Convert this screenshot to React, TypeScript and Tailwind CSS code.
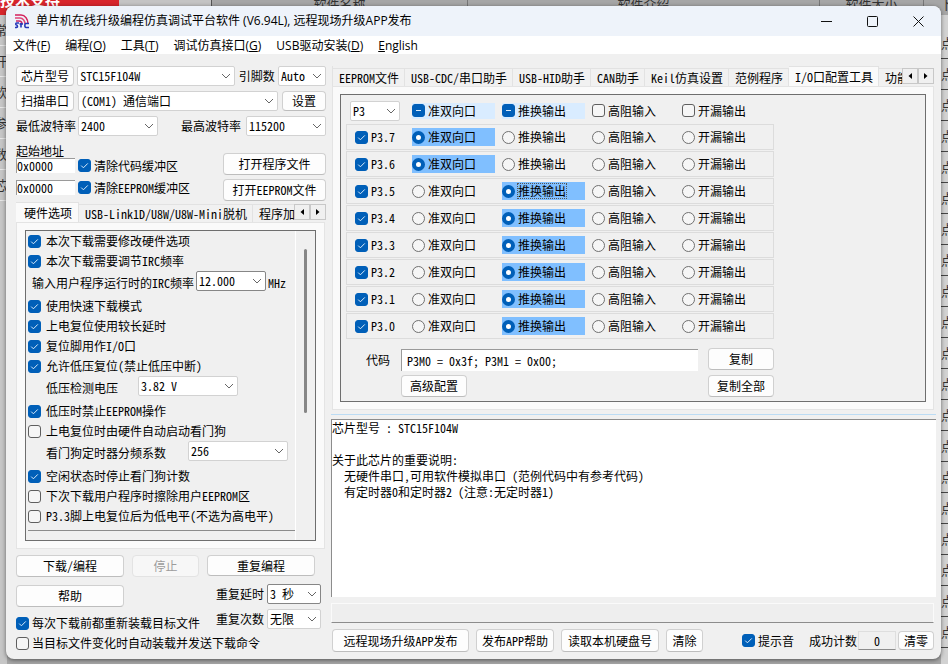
import React, { useId } from "react";

type CheckProps = {
  text: string;
  on?: boolean;
  mixed?: boolean;
  className?: string;
};

function Check({ text, on, mixed, className = "gap-[3px]" }: CheckProps) {
  return (
    <label className={"flex items-center whitespace-nowrap " + className}>
      <span className="grid h-[13px] w-[13px] shrink-0">
        <input
          type="checkbox"
          defaultChecked={on || mixed}
          className="peer col-start-1 row-start-1 h-[13px] w-[13px] appearance-none rounded-[3px] border border-[#5f5f5f] bg-[#f6f6f6] checked:border-[#005fb8] checked:bg-[#005fb8]"
        />
        <svg
          viewBox="0 0 13 13"
          className="pointer-events-none invisible col-start-1 row-start-1 h-[13px] w-[13px] peer-checked:visible"
          fill="none"
          stroke="#d9ebfa"
          strokeWidth="1"
        >
          {mixed ? <path d="M4 6.5h5" /> : <path d="M3.2 6.6l2.2 2.2 4.4-4.4" />}
        </svg>
      </span>
      <span>{text}</span>
    </label>
  );
}

type PickProps = {
  name: string;
  values: string[];
  className?: string;
  dark?: boolean;
  id?: string;
};

function Pick({ name, values, className = "", dark, id }: PickProps) {
  return (
    <span className={"grid h-5 shrink-0 " + className}>
      <select
        id={id}
        aria-label={id ? undefined : name}
        className={
          "col-start-1 row-start-1 h-5 w-full appearance-none rounded-[2px] border bg-white pl-[2px] leading-4 " +
          (dark ? "border-[#868686]" : "border-[#d2d2d2]")
        }
      >
        {values.map((v) => (
          <option key={v}>{v}</option>
        ))}
      </select>
      <svg
        viewBox="0 0 10 6"
        className="pointer-events-none col-start-1 row-start-1 mr-1 h-[6px] w-[10px] self-center justify-self-end"
        fill="none"
        stroke="#666"
        strokeWidth="1"
      >
        <path d="M1 1l4 4 4-4" />
      </svg>
    </span>
  );
}

function Btn({
  children,
  className = "",
  disabled,
}: {
  children: React.ReactNode;
  className?: string;
  disabled?: boolean;
}) {
  return (
    <button
      type="button"
      disabled={disabled}
      className={
        "flex shrink-0 items-center justify-center whitespace-nowrap rounded-[4px] border border-[#d0d0d0] border-b-[#bdbdbd] bg-[#fdfdfd] disabled:border-[#e3e3e3] disabled:bg-[#f7f7f7] disabled:text-[#9c9c9c] " +
        className
      }
    >
      {children}
    </button>
  );
}

function Arrows() {
  return (
    <div className="flex shrink-0">
      <button type="button" aria-label="向左" className="flex h-4 w-4 items-center justify-center border border-[#c8c8c8] bg-[#f0f0f0]">
        <svg viewBox="0 0 4 6" className="h-[6px] w-1"><path d="M4 0v6L0.5 3z" /></svg>
      </button>
      <button type="button" aria-label="向右" className="flex h-4 w-4 items-center justify-center border border-[#c8c8c8] bg-[#f0f0f0]">
        <svg viewBox="0 0 4 6" className="h-[6px] w-1"><path d="M0 0v6l3.5-3z" /></svg>
      </button>
    </div>
  );
}

function Tab({ text, active, className = "pl-[6px] pr-[5px]" }: { text: string; active?: boolean; className?: string }) {
  return (
    <button
      type="button"
      role="tab"
      aria-selected={!!active}
      className={
        "shrink-0 overflow-hidden whitespace-nowrap border border-b-0 border-l-0 border-[#e2e2e2] text-left leading-4 " +
        (active ? "h-5 bg-[#fafafa] " : "h-[18px] bg-[#f1f1f1] ") +
        className
      }
    >
      {text}
    </button>
  );
}

function Menu({ text, mark, close = true }: { text: string; mark: string; close?: boolean }) {
  return (
    <button type="button" className="whitespace-nowrap">
      {close ? (
        <>
          {text}(<u>{mark}</u>)
        </>
      ) : (
        <>
          <u>{mark}</u>
          {text}
        </>
      )}
    </button>
  );
}

const modes = ["准双向口", "推换输出", "高阻输入", "开漏输出"];
const pins = [
  { pin: "P3.7", mode: 0 },
  { pin: "P3.6", mode: 0 },
  { pin: "P3.5", mode: 1, focus: true },
  { pin: "P3.4", mode: 1 },
  { pin: "P3.3", mode: 1 },
  { pin: "P3.2", mode: 1 },
  { pin: "P3.1", mode: 1 },
  { pin: "P3.0", mode: 1 },
];

function PinRow({ pin, mode, focus }: { pin: string; mode: number; focus?: boolean }) {
  return (
    <div role="radiogroup" aria-label={pin} className="flex h-[26px] w-[428px] items-center border border-[#dcdcdc] pl-2">
      <Check text={pin} on className="w-[57px] gap-[3px]" />
      <div className="flex gap-[7px]">
        {modes.map((m, i) => (
          <label
            key={m}
            className={
              "flex h-[18px] w-[83px] items-center gap-[3px] whitespace-nowrap " + (i === mode ? "bg-[#80bfff]" : "")
            }
          >
            <input
              type="radio"
              name={pin}
              defaultChecked={i === mode}
              className="h-[13px] w-[13px] shrink-0 appearance-none rounded-full border border-[#707070] bg-[#f6f6f6] checked:border-4 checked:border-[#005fb8] checked:bg-white"
            />
            <span className={i === mode && focus ? "outline-1 outline-dotted outline-[#555] leading-[14px]" : ""}>{m}</span>
          </label>
        ))}
      </div>
    </div>
  );
}

function HardwareOptions() {
  const irc = useId();
  const lvd = useId();
  const wdt = useId();
  return (
    <div className="flex h-[311px] justify-between border border-[#6e6e6e] bg-[#f0f0f0]">
      <div className="flex-1 border-r border-white pl-[2px]">
        <Check className="h-5 gap-[5px]" on text="本次下载需要修改硬件选项" />
        <Check className="h-5 gap-[5px]" on text="本次下载需要调节IRC频率" />
        <div className="flex h-[25px] items-start gap-[2px] pl-1">
          <label htmlFor={irc} className="whitespace-nowrap pt-1">输入用户程序运行时的IRC频率</label>
          <Pick id={irc} name="IRC" values={["12.000", "11.0592"]} className="w-[70px]" dark />
          <span className="-mr-8 pt-1">MHz</span>
        </div>
        <Check className="h-5 gap-[5px]" on text="使用快速下载模式" />
        <Check className="h-5 gap-[5px]" on text="上电复位使用较长延时" />
        <Check className="h-5 gap-[5px]" on text="复位脚用作I/O口" />
        <Check className="h-5 gap-[5px]" on text="允许低压复位(禁止低压中断)" />
        <div className="flex h-[25px] items-start gap-5 pl-[18px]">
          <label htmlFor={lvd} className="whitespace-nowrap pt-1">低压检测电压</label>
          <Pick id={lvd} name="低压" values={["3.82 V", "4.32 V"]} className="w-[100px]" />
        </div>
        <Check className="h-5 gap-[5px]" on text="低压时禁止EEPROM操作" />
        <Check className="h-5 gap-[5px]" text="上电复位时由硬件自动启动看门狗" />
        <div className="flex h-[25px] items-start gap-[22px] pl-[18px]">
          <label htmlFor={wdt} className="whitespace-nowrap pt-1">看门狗定时器分频系数</label>
          <Pick id={wdt} name="分频" values={["256", "128"]} className="w-[100px]" />
        </div>
        <Check className="h-5 gap-[5px]" on text="空闲状态时停止看门狗计数" />
        <Check className="h-5 gap-[5px]" text="下次下载用户程序时擦除用户EEPROM区" />
        <Check className="h-5 gap-[5px]" text="P3.3脚上电复位后为低电平(不选为高电平)" />
        <hr className="mt-1 border-t border-[#8c8c8c]" />
      </div>
      <div className="flex w-[19px] justify-center pt-[18px]">
        <div className="h-[164px] w-[3px] rounded-full bg-[#868686]" />
      </div>
    </div>
  );
}

function LeftColumn() {
  const id = useId();
  return (
    <div className="w-[310px] shrink-0 pt-3">
      <div className="flex items-center justify-between">
        <Btn className="h-5 w-[58px]">芯片型号</Btn>
        <Pick name="芯片型号" values={["STC15F104W"]} className="w-[158px]" />
        <label htmlFor={id + "a"}>引脚数</label>
        <Pick id={id + "a"} name="引脚数" values={["Auto"]} className="w-12" />
      </div>
      <div className="mt-[5px] flex items-center justify-between">
        <Btn className="h-5 w-[58px]">扫描串口</Btn>
        <Pick name="串口" values={["(COM1) 通信端口"]} className="w-[200px]" />
        <Btn className="h-5 w-11">设置</Btn>
      </div>
      <div className="mt-[5px] flex items-center justify-between">
        <div className="flex items-center gap-[2px]">
          <label htmlFor={id + "b"}>最低波特率</label>
          <Pick id={id + "b"} name="最低波特率" values={["2400"]} className="w-20" />
        </div>
        <div className="flex items-center gap-[5px]">
          <label htmlFor={id + "c"}>最高波特率</label>
          <Pick id={id + "c"} name="最高波特率" values={["115200"]} className="w-20" />
        </div>
      </div>
      <div className="mt-[7px] flex items-start justify-between">
        <div>
          <div className="leading-[15px]">起始地址</div>
          <div className="flex flex-col gap-[7px]">
            {["清除代码缓冲区", "清除EEPROM缓冲区"].map((t) => (
              <div key={t} className="flex h-[15px] items-center gap-[3px]">
                <input
                  aria-label="起始地址"
                  defaultValue="0x0000"
                  className="h-[15px] w-[59px] border-l border-t border-[#9a9a9a] bg-white"
                />
                <Check text={t} on />
              </div>
            ))}
          </div>
        </div>
        <div className="flex flex-col gap-1 pt-[10px]">
          <Btn className="h-[22px] w-[103px]">打开程序文件</Btn>
          <Btn className="h-[22px] w-[103px]">打开EEPROM文件</Btn>
        </div>
      </div>
      <div className="mt-px flex items-end">
        <div role="tablist" className="flex min-w-0 flex-1 items-end overflow-hidden">
          <Tab text="硬件选项" active className="pl-2 pr-[6px]" />
          <Tab text="USB-Link1D/U8W/U8W-Mini脱机" />
          <Tab text="程序加密后传输" />
        </div>
        <div className="mb-[2px]"><Arrows /></div>
      </div>
      <div className="mr-px border border-[#e4e4e4] bg-[#fafafa] px-2 py-[7px]">
        <HardwareOptions />
      </div>
      <div className="mt-[6px] flex items-start justify-between pr-[5px]">
        <div className="flex flex-col gap-2">
          <div className="flex gap-2">
            <Btn className="h-[22px] w-[108px]">下载/编程</Btn>
            <Btn className="h-[22px] w-[67px]" disabled>停止</Btn>
          </div>
          <Btn className="h-[22px] w-[108px]">帮助</Btn>
          <Check text="每次下载前都重新装载目标文件" on className="h-4 gap-[3px]" />
        </div>
        <div className="flex flex-col items-end">
          <Btn className="mb-2 mr-[6px] h-[21px] w-[108px]">重复编程</Btn>
          <div className="mb-[5px] flex items-center gap-[3px]">
            <label htmlFor={id + "d"}>重复延时</label>
            <Pick id={id + "d"} name="重复延时" values={["3 秒"]} className="w-[54px]" dark />
          </div>
          <div className="flex items-center gap-[3px]">
            <label htmlFor={id + "e"}>重复次数</label>
            <Pick id={id + "e"} name="重复次数" values={["无限"]} className="w-[54px]" />
          </div>
        </div>
      </div>
      <Check text="当目标文件变化时自动装载并发送下载命令" className="mt-1 h-4 gap-[3px]" />
    </div>
  );
}

function RightColumn() {
  return (
    <div className="flex min-w-0 flex-1 flex-col pt-3">
      <div className="flex items-end pl-px pr-[2px]">
        <div role="tablist" className="flex min-w-0 flex-1 items-end overflow-hidden border-l border-[#e2e2e2]">
          <Tab text="EEPROM文件" />
          <Tab text="USB-CDC/串口助手" />
          <Tab text="USB-HID助手" />
          <Tab text="CAN助手" />
          <Tab text="Keil仿真设置" />
          <Tab text="范例程序" />
          <Tab text="I/O口配置工具" active />
          <Tab text="功能脚切换" />
        </div>
        <div className="mb-[2px]"><Arrows /></div>
      </div>
      <div className="ml-px mr-[2px] border border-[#e4e4e4] bg-[#fafafa] p-[7px]">
        <div className="border border-[#6e6e6e] bg-[#f0f0f0] pb-1 pl-[5px] pt-[5px]">
          <div className="flex h-[21px] items-center pl-1">
            <Pick name="端口" values={["P3"]} className="w-[50px]" />
            <div className="ml-3 flex gap-[7px]">
              <Check text={modes[0]} mixed className="h-4 w-[83px] gap-[3px] bg-[#d9ecff]" />
              <Check text={modes[1]} mixed className="h-4 w-[83px] gap-[3px] bg-[#d9ecff]" />
              <Check text={modes[2]} className="h-4 w-[83px] gap-[3px]" />
              <Check text={modes[3]} className="h-4 w-[83px] gap-[3px]" />
            </div>
          </div>
          <div className="mt-[3px] flex flex-col gap-px">
            {pins.map((p) => (
              <PinRow key={p.pin} {...p} />
            ))}
          </div>
          <div className="mt-[9px] flex items-start pl-5">
            <label htmlFor="code" className="w-[35px] pt-1">代码</label>
            <div className="flex flex-col gap-1">
              <input
                id="code"
                defaultValue="P3M0 = 0x3f; P3M1 = 0x00;"
                className="mt-px h-[22px] w-[297px] border-l border-t border-[#9a9a9a] bg-white pl-[5px]"
              />
              <Btn className="h-[22px] w-[66px]">高级配置</Btn>
            </div>
            <div className="ml-[10px] flex flex-col gap-[5px]">
              <Btn className="h-[22px] w-[66px]">复制</Btn>
              <Btn className="h-[22px] w-[66px]">复制全部</Btn>
            </div>
          </div>
        </div>
      </div>
      <div className="mt-1 border-t border-[#bcdcf4]" />
      <textarea
        aria-label="芯片说明"
        className="mt-1 h-[178px] w-full resize-none border-l border-t border-[#8c8c8c] bg-white leading-4"
        defaultValue={
          "芯片型号 : STC15F104W\n\n关于此芯片的重要说明:\n  无硬件串口,可用软件模拟串口 (范例代码中有参考代码)\n  有定时器0和定时器2 (注意:无定时器1)"
        }
      />
      <div className="mr-[2px] mt-[6px] h-5 border border-[#fafafa] border-b-[#8c8c8c] bg-[#eeeeee]" />
      <div className="mt-[6px] flex items-center gap-[7px] pl-px pr-[2px]">
        <Btn className="h-[23px] w-[137px]">远程现场升级APP发布</Btn>
        <Btn className="h-[23px] w-[78px]">发布APP帮助</Btn>
        <Btn className="h-[23px] w-[98px]">读取本机硬盘号</Btn>
        <Btn className="h-[23px] w-[37px]">清除</Btn>
        <div className="ml-auto flex items-center">
          <Check text="提示音" on />
          <label htmlFor="count" className="ml-[15px]">成功计数</label>
          <input
            id="count"
            readOnly
            defaultValue="0"
            className="ml-px mr-[2px] h-[19px] w-[38px] border border-[#dedede] border-b-[#8c8c8c] bg-[#f0f0f0] text-center"
          />
          <Btn className="h-[19px] w-[36px]">清零</Btn>
        </div>
      </div>
    </div>
  );
}

function Backdrop() {
  const rows = Array.from({ length: 20 }, (_, i) => i);
  return (
    <div aria-hidden="true" className="absolute inset-x-0 top-0 bottom-[3px] flex flex-col overflow-hidden bg-[#a6a6a6] text-[13px] text-[#333]">
      <div className="flex h-[15px] shrink-0">
        <div className="h-[15px] w-[119px] bg-[#d8262c]">
          <span className="-mt-2 block text-[15px] font-bold leading-4 text-white">技术支持</span>
        </div>
        <div className="w-[93px] border-r border-[#555] bg-[#c4c4c4]" />
        <div className="-mt-1 flex flex-1 justify-between leading-4">
          <span className="w-64 border-r border-[#777] text-center">软件名称</span>
          <span className="flex-1 border-r border-[#777] text-center">软件介绍</span>
          <span className="w-[104px] border-r border-[#777] text-center">软件大小</span>
          <span className="w-6 pl-4">下</span>
        </div>
      </div>
      <div className="flex min-h-0 flex-1 justify-between overflow-hidden">
        <div className="w-[7px] overflow-hidden bg-[#c6c6c6]">
          {["常", "开", "软", "参", "数", "芯"].map((t) => (
            <div key={t} className="flex h-[31px] justify-end border-b border-[#e6e6e6] leading-[30px]">{t}</div>
          ))}
        </div>
        <div className="w-[7px] overflow-hidden bg-[#d2d2d2] pt-[13px]">
          {rows.map((r) => (
            <div key={r} className="h-[31px] border-b border-[#444] leading-[30px]">点</div>
          ))}
        </div>
      </div>
    </div>
  );
}

export default function App() {
  return (
    <div className="relative min-h-screen bg-white pt-[6px] text-[12px] leading-4 text-black [font-family:'Noto_Sans_Mono_CJK_SC','Noto_Sans_CJK_SC',monospace]">
      <Backdrop />
      <main className="relative ml-[6px] mr-[7px] overflow-hidden rounded-lg bg-[#f0f0f0] shadow-[0_1px_4px_rgba(0,0,0,0.5)]">
        <header className="flex h-[30px] items-center bg-[#eef3fa] pl-2 [font-family:'Open_Sans','Noto_Sans_CJK_SC',sans-serif]">
          <svg viewBox="0 0 16 16" className="mr-[6px] h-4 w-4" fill="none" strokeWidth="1.6">
            <path d="M1 2h6c4 0 7 4 7 9" stroke="#d3225c" />
            <path d="M1 5h5c3 0 5 3 5 6" stroke="#e0457a" />
            <path d="M2 8h3c2 0 3 1 3 3" stroke="#c92a6a" />
            <path d="M5 10H2.500c-1 0-1 2 0 2s1.500 2.500 0 2.500H1M7 10v4.500M5.500 11h3.500M15 10.500h-3c-1.500 0-1.500 4 0 4h3" stroke="#2436b8" />
          </svg>
          <h1 className="flex-1 truncate">单片机在线升级编程仿真调试平台软件 (V6.94L), 远程现场升级APP发布</h1>
          <button type="button" aria-label="最小化" className="flex h-[30px] w-[45px] items-center justify-center">
            <svg viewBox="0 0 11 11" className="h-[11px] w-[11px]" stroke="#111"><path d="M0 5.500h11" /></svg>
          </button>
          <button type="button" aria-label="最大化" className="flex h-[30px] w-[46px] items-center justify-center">
            <svg viewBox="0 0 11 11" className="h-[11px] w-[11px]" stroke="#111" fill="none"><rect x="0.500" y="0.500" width="10" height="10" rx="1" /></svg>
          </button>
          <button type="button" aria-label="关闭" className="flex h-[30px] w-[46px] items-center justify-center">
            <svg viewBox="0 0 11 11" className="h-[11px] w-[11px]" stroke="#111"><path d="M0.500 0.500l10 10M10.500 0.500l-10 10" /></svg>
          </button>
        </header>
        <nav className="flex h-[18px] items-end gap-[15px] bg-white pl-[7px] [font-family:'Open_Sans','Noto_Sans_CJK_SC',sans-serif]">
          <Menu text="文件" mark="F" />
          <Menu text="编程" mark="O" />
          <Menu text="工具" mark="T" />
          <Menu text="调试仿真接口" mark="G" />
          <Menu text="USB驱动安装" mark="D" />
          <Menu text="nglish" mark="E" close={false} />
        </nav>
        <div className="flex gap-[5px] pb-[7px] pl-[10px] pr-[5px]">
          <LeftColumn />
          <RightColumn />
        </div>
      </main>
    </div>
  );
}
